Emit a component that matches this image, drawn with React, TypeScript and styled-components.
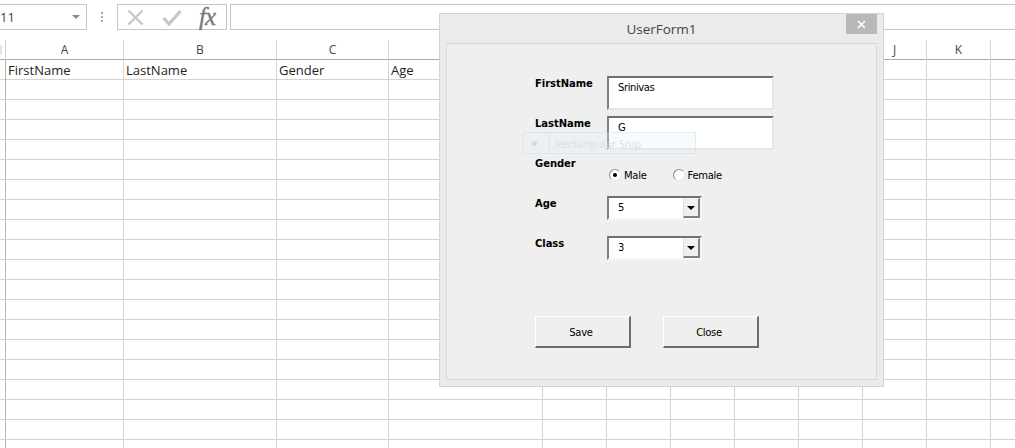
import React from "react";
import styled, { createGlobalStyle } from "styled-components";

const GlobalStyle = createGlobalStyle`
  html, body {
    margin: 0;
    padding: 0;
    background: #fff;
    overflow: hidden;
  }
`;

const COLUMN_WIDTHS = [6, 118, 153, 112, 154, 64, 64, 64, 64, 64, 64, 64, 64];
const HEADERS = ["", "A", "B", "C", "", "", "", "", "", "", "J", "K", ""];
const FIRST_ROW = ["", "FirstName", "LastName", "Gender", "Age"];
const ROW_COUNT = 20;
const TEMPLATE = COLUMN_WIDTHS.map((w) => `${w}px`).join(" ");

const Page = styled.div`
  position: relative;
  width: 1015px;
  height: 448px;
  overflow: hidden;
  background: #fff;
  font-family: "Open Sans", sans-serif;
`;

const FormulaBar = styled.div`
  display: flex;
  align-items: center;
  gap: 4px;
  height: 26px;
  padding-top: 4px;
  padding-bottom: 10px;
`;

const NameBox = styled.div`
  display: flex;
  align-items: center;
  justify-content: space-between;
  box-sizing: border-box;
  width: 87px;
  height: 26px;
  padding-right: 6px;
  border: 1px solid #c6c6c6;
  border-left: none;
  font-size: 13px;
  color: #444;
`;

const Caret = styled.span`
  width: 0;
  height: 0;
  border-left: 4px solid transparent;
  border-right: 4px solid transparent;
  border-top: 4px solid #8a8a8a;
`;

const Grip = styled.div`
  display: flex;
  flex-direction: column;
  gap: 2px;
  margin: 0 10px;
`;

const GripDot = styled.span`
  width: 2px;
  height: 2px;
  background: #a8a8a8;
`;

const FormulaButtons = styled.div`
  display: flex;
  align-items: center;
  box-sizing: border-box;
  width: 110px;
  height: 26px;
  margin-right: -1px;
  padding-left: 9px;
  gap: 18px;
  border: 1px solid #c6c6c6;
`;

const FxLabel = styled.span`
  margin-left: -1px;
  font-family: "Liberation Serif", serif;
  font-style: italic;
  font-size: 25px;
  line-height: 24px;
  letter-spacing: -1px;
  -webkit-text-stroke: 0.4px #7a7a7a;
  color: #7a7a7a;
`;

const FormulaInput = styled.div`
  flex: 1;
  height: 26px;
  box-sizing: border-box;
  border: 1px solid #c6c6c6;
  border-right: none;
`;

const HeaderRow = styled.div`
  display: grid;
  grid-template-columns: ${TEMPLATE};
  height: 19px;
  border-bottom: 1px solid #ababab;
`;

const HeaderCell = styled.div`
  box-sizing: border-box;
  border-right: 1px solid #d4d4d4;
  font-size: 12px;
  line-height: 20px;
  text-align: center;
  color: #444;
`;

const CornerMark = styled.span`
  display: block;
  width: 2px;
  height: 10px;
  margin-top: 5px;
  background: #e4e4e4;
`;

const SheetRow = styled.div`
  display: grid;
  grid-template-columns: ${TEMPLATE};
  box-sizing: border-box;
  height: 20px;
  border-bottom: 1px solid #d4d4d4;
`;

const SheetCell = styled.div<{ $edge?: boolean }>`
  box-sizing: border-box;
  padding-left: 2px;
  border-right: 1px solid ${(p) => (p.$edge ? "#b4b4b4" : "#d4d4d4")};
  font-size: 13px;
  line-height: 21px;
  white-space: nowrap;
  color: #222;
`;

const Dialog = styled.div`
  position: absolute;
  left: 439px;
  top: 13px;
  box-sizing: border-box;
  width: 445px;
  height: 374px;
  display: flex;
  flex-direction: column;
  background: #ebebeb;
  border: 1px solid #d4d4d4;
`;

const TitleBar = styled.div`
  display: grid;
  grid-template-columns: 1fr auto 1fr;
  height: 29px;
  padding-right: 6px;
`;

const Title = styled.div`
  grid-column: 2;
  margin-left: 6px;
  font-size: 13.5px;
  line-height: 30px;
  color: #444;
`;

const CloseButton = styled.div`
  grid-column: 3;
  justify-self: end;
  display: flex;
  align-items: center;
  justify-content: center;
  width: 31px;
  height: 20px;
  background: #b9b9b9;
`;

const Panel = styled.div`
  flex: 1;
  margin: 0 6px 6px;
  padding: 32px 0 0 88px;
  background: #efefef;
  border: 1px solid #d8d8d8;
`;

const FormGrid = styled.div`
  display: grid;
  grid-template-columns: 72px 1fr;
  grid-auto-rows: 34px;
  row-gap: 6px;
`;

const FieldLabel = styled.div`
  padding-top: 1px;
  font-family: "DejaVu Sans", sans-serif;
  font-weight: bold;
  font-size: 10px;
  line-height: 14px;
  letter-spacing: -0.05px;
  color: #000;
`;

const TextBox = styled.div`
  box-sizing: border-box;
  width: 167px;
  height: 34px;
  padding: 3px 0 0 9px;
  background: #fff;
  border-style: solid;
  border-width: 2px;
  border-color: #707070 #e6e6e6 #e6e6e6 #808080;
  font-family: "DejaVu Sans", sans-serif;
  font-size: 10px;
  line-height: 14px;
  letter-spacing: -0.4px;
  color: #000;
`;

const RadioGroup = styled.div`
  display: flex;
  gap: 26px;
  padding: 13px 0 0 2px;
`;

const RadioOption = styled.div`
  display: flex;
  align-items: center;
  gap: 3px;
  height: 12px;
  font-family: "DejaVu Sans", sans-serif;
  font-size: 10px;
  letter-spacing: -0.3px;
  color: #000;
`;

const RadioCircle = styled.span<{ $checked?: boolean }>`
  display: flex;
  align-items: center;
  justify-content: center;
  box-sizing: border-box;
  width: 12px;
  height: 12px;
  border-radius: 50%;
  background: #fff;
  border: 1px solid #8a8a8a;
  border-right-color: #e8e8e8;
  border-bottom-color: #e8e8e8;

  &::after {
    content: "";
    display: ${(p) => (p.$checked ? "block" : "none")};
    width: 4px;
    height: 4px;
    border-radius: 50%;
    background: #000;
  }
`;

const ComboBox = styled.div`
  display: flex;
  box-sizing: border-box;
  width: 95px;
  height: 24px;
  background: #fff;
  border-style: solid;
  border-width: 2px;
  border-color: #707070 #f6f6f6 #f6f6f6 #808080;
`;

const ComboValue = styled.div`
  flex: 1;
  padding: 3px 0 0 9px;
  font-family: "DejaVu Sans", sans-serif;
  font-size: 10px;
  line-height: 14px;
  color: #000;
`;

const ComboArrow = styled.div`
  display: flex;
  align-items: center;
  justify-content: center;
  box-sizing: border-box;
  width: 17px;
  background: #f0f0f0;
  border-style: solid;
  border-width: 1px 2px 2px 1px;
  border-color: #f8f8f8 #808080 #808080 #e0e0e0;

  &::after {
    content: "";
    width: 0;
    height: 0;
    border-left: 4px solid transparent;
    border-right: 4px solid transparent;
    border-top: 4px solid #000;
  }
`;

const ButtonRow = styled.div`
  display: flex;
  gap: 32px;
  margin-top: 46px;
`;

const FormButton = styled.button`
  box-sizing: border-box;
  width: 96px;
  height: 32px;
  padding: 2px 3px 0 0;
  background: #efefef;
  border-style: solid;
  border-width: 1px 2px 2px 1px;
  border-color: #fff #6e6e6e #6e6e6e #fff;
  font-family: "DejaVu Sans", sans-serif;
  font-size: 10px;
  letter-spacing: -0.3px;
  color: #000;
`;

const SnipGhost = styled.div`
  position: absolute;
  left: 83px;
  top: 118px;
  box-sizing: border-box;
  width: 173px;
  height: 22px;
  display: flex;
  align-items: center;
  background: rgba(228, 242, 250, 0.3);
  border: 1px solid rgba(180, 215, 235, 0.35);
`;

const SnipIcon = styled.div`
  display: flex;
  align-items: center;
  box-sizing: border-box;
  width: 26px;
  height: 100%;
  padding-left: 8px;
  border-right: 1px solid rgba(180, 215, 235, 0.4);

  &::after {
    content: "";
    width: 5px;
    height: 5px;
    border-radius: 50%;
    background: #d2d8dc;
  }
`;

const SnipText = styled.span`
  margin-left: 5px;
  font-family: "Open Sans", sans-serif;
  font-size: 11px;
  color: #dcdfe2;
`;

const rows = Array.from({ length: ROW_COUNT }, (_, i) => i);

export default function App() {
  return (
    <Page>
      <GlobalStyle />
      <FormulaBar>
        <NameBox>
          11
          <Caret />
        </NameBox>
        <Grip>
          <GripDot />
          <GripDot />
          <GripDot />
        </Grip>
        <FormulaButtons>
          <svg width="17" height="17" viewBox="0 0 17 17">
            <path d="M1.5 1.5 L15.5 15.5 M15.5 1.5 L1.5 15.5" stroke="#c6c6c6" strokeWidth="2.4" fill="none" />
          </svg>
          <svg width="20" height="17" viewBox="0 0 20 17">
            <path d="M1.5 9 L7 15 L18.5 2" stroke="#c6c6c6" strokeWidth="3.2" fill="none" />
          </svg>
          <FxLabel>fx</FxLabel>
        </FormulaButtons>
        <FormulaInput />
      </FormulaBar>

      <HeaderRow>
        {HEADERS.map((h, i) => (
          <HeaderCell key={i}>{i === 0 ? <CornerMark /> : h}</HeaderCell>
        ))}
      </HeaderRow>

      {rows.map((r) => (
        <SheetRow key={r}>
          {COLUMN_WIDTHS.map((_, c) => (
            <SheetCell key={c} $edge={c === 0}>
              {r === 0 ? FIRST_ROW[c] : ""}
            </SheetCell>
          ))}
        </SheetRow>
      ))}

      <Dialog>
        <TitleBar>
          <Title>UserForm1</Title>
          <CloseButton>
            <svg width="9" height="9" viewBox="0 0 9 9">
              <path d="M1 1 L8 8 M8 1 L1 8" stroke="#fff" strokeWidth="1.6" fill="none" />
            </svg>
          </CloseButton>
        </TitleBar>
        <Panel>
          <FormGrid>
            <FieldLabel>FirstName</FieldLabel>
            <TextBox>Srinivas</TextBox>
            <FieldLabel>LastName</FieldLabel>
            <TextBox>G</TextBox>
            <FieldLabel>Gender</FieldLabel>
            <RadioGroup>
              <RadioOption>
                <RadioCircle $checked />
                Male
              </RadioOption>
              <RadioOption>
                <RadioCircle />
                Female
              </RadioOption>
            </RadioGroup>
            <FieldLabel>Age</FieldLabel>
            <ComboBox>
              <ComboValue>5</ComboValue>
              <ComboArrow />
            </ComboBox>
            <FieldLabel>Class</FieldLabel>
            <ComboBox>
              <ComboValue>3</ComboValue>
              <ComboArrow />
            </ComboBox>
          </FormGrid>
          <ButtonRow>
            <FormButton>Save</FormButton>
            <FormButton>Close</FormButton>
          </ButtonRow>
        </Panel>
        <SnipGhost>
          <SnipIcon />
          <SnipText>Rectangular Snip</SnipText>
        </SnipGhost>
      </Dialog>
    </Page>
  );
}
